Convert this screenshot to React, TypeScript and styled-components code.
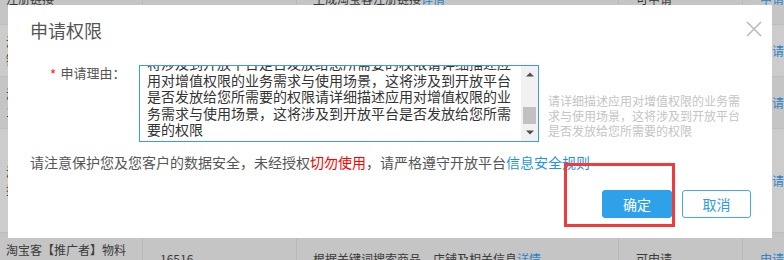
import React from "react";
import styled, { createGlobalStyle } from "styled-components";

const GlobalStyle = createGlobalStyle`
  html, body { margin: 0; padding: 0; }
  body {
    width: 784px;
    height: 260px;
    overflow: hidden;
    background: #c8c8c8;
    font-family: "Noto Sans CJK SC", "Noto Sans", sans-serif;
  }
`;

const Page = styled.div`
  position: relative;
  width: 784px;
  height: 260px;
  overflow: hidden;
`;

const Table = styled.div`
  margin-top: -27px;
  display: flex;
  flex-direction: column;
`;

const Row = styled.div<{ $h: number; $light: boolean }>`
  display: grid;
  grid-template-columns: 143px 154px 322px 124px 1fr;
  height: ${(p) => p.$h}px;
  box-sizing: border-box;
  border-bottom: 1px solid #bcbcbc;
  background: ${(p) => (p.$light ? "#cccccc" : "#c5c5c5")};
`;

const Cell = styled.div<{ $pad: number }>`
  display: flex;
  align-items: center;
  box-sizing: border-box;
  padding: 0 16px 0 ${(p) => p.$pad}px;
  border-right: 1px solid #b9b9b9;
  font-size: 12px;
  line-height: 18px;
  color: #3a3a3a;
  white-space: normal;
  overflow: hidden;
  &:last-child { border-right: none; white-space: nowrap; }
`;

const Link = styled.span`
  color: #2f82c6;
`;

const Modal = styled.div`
  position: absolute;
  left: 8px;
  top: 5px;
  width: 764px;
  height: 233px;
  background: #ffffff;
  display: flex;
  flex-direction: column;
`;

const Header = styled.div`
  height: 50px;
  display: flex;
  align-items: center;
  justify-content: space-between;
  padding: 0 10px 0 22px;
`;

const Title = styled.div`
  font-size: 18px;
  line-height: 24px;
  color: #555555;
`;

const Close = styled.div`
  width: 16px;
  height: 16px;
  display: flex;
  margin-top: -2px;
`;

const FormRow = styled.div`
  display: flex;
  align-items: flex-start;
  margin-top: 10px;
  padding-left: 42.5px;
`;

const Label = styled.div`
  width: 88.5px;
  font-size: 13px;
  line-height: 16px;
  color: #555555;
  white-space: nowrap;
`;

const Star = styled.span`
  display: inline-block;
  width: 10px;
  color: #ff0000;
  font-family: "Liberation Sans", sans-serif;
  font-size: 13px;
`;

const TextBox = styled.div`
  width: 400px;
  height: 77px;
  box-sizing: border-box;
  border: 1px solid #3a9ce4;
  display: flex;
  overflow: hidden;
`;

const TextContent = styled.div`
  flex: 1;
  overflow: hidden;
  padding-left: 7px;
  font-size: 14px;
  line-height: 16.4px;
  color: #333333;
`;

const TextInner = styled.div`
  margin-top: -10.6px;
`;

const Scrollbar = styled.div`
  width: 17px;
  background: #f1f1f1;
  display: flex;
  flex-direction: column;
  align-items: center;
`;

const ScrollArrow = styled.div`
  height: 17px;
  width: 17px;
  display: flex;
  align-items: center;
  justify-content: center;
`;

const Track = styled.div`
  flex: 1;
  display: flex;
  flex-direction: column;
  justify-content: flex-end;
  align-items: center;
`;

const Thumb = styled.div`
  width: 13px;
  height: 17px;
  background: #c1c1c1;
`;

const Hint = styled.div`
  align-self: flex-end;
  margin: 0 0 4.5px 9px;
  width: 192px;
  font-size: 12px;
  line-height: 15px;
  color: #c4c4c4;
`;

const Notice = styled.div`
  margin-top: 9.7px;
  padding-left: 22px;
  font-size: 14px;
  line-height: 20px;
  color: #555555;
  white-space: nowrap;
`;

const Danger = styled.span`
  color: #ff0000;
`;

const RuleLink = styled.span`
  color: #1f93e2;
`;

const Footer = styled.div`
  margin-top: 18.3px;
  display: flex;
  justify-content: flex-end;
  gap: 10px;
  padding-right: 21px;
`;

const Button = styled.button<{ $primary?: boolean }>`
  width: ${(p) => (p.$primary ? 70 : 69)}px;
  height: 28px;
  box-sizing: border-box;
  border-radius: 3px;
  border: 1px solid ${(p) => (p.$primary ? "#2ea1ea" : "#45a8ea")};
  background: ${(p) => (p.$primary ? "#2ea1ea" : "#ffffff")};
  color: ${(p) => (p.$primary ? "#ffffff" : "#2a9be6")};
  font-family: "Noto Sans CJK SC", sans-serif;
  font-size: 14px;
  padding: 0;
`;

const Annotation = styled.div`
  position: absolute;
  left: 556px;
  top: 158px;
  width: 111px;
  height: 64px;
  box-sizing: border-box;
  border: 3px solid #f23a3a;
  pointer-events: none;
`;

const reason =
  "将涉及到开放平台是否发放给您所需要的权限请详细描述应用对增值权限的业务需求与使用场景，这将涉及到开放平台是否发放给您所需要的权限请详细描述应用对增值权限的业务需求与使用场景，这将涉及到开放平台是否发放给您所需要的权限";

const rows = [
  { h: 52, light: false, c1: "注册链接", c2: "", c3: "生成淘宝客注册链接", c4: "可申请" },
  { h: 52, light: true, c1: "淘宝客【推广者】商品链接转换", c2: "", c3: "", c4: "" },
  { h: 52, light: false, c1: "淘宝客【推广者】1688物料", c2: "", c3: "", c4: "" },
  { h: 104, light: true, c1: "淘宝客【推广者】店铺搜索", c2: "", c3: "", c4: "" },
  { h: 52, light: false, c1: "淘宝客【推广者】物料搜索", c2: "16516", c3: "根据关键词搜索商品、店铺及相关信息", c4: "可申请" },
];

export default function App() {
  return (
    <Page>
      <GlobalStyle />
      <Table>
        {rows.map((r, i) => (
          <Row key={i} $h={r.h} $light={r.light}>
            <Cell $pad={6}>{r.c1}</Cell>
            <Cell $pad={17}>{r.c2}</Cell>
            <Cell $pad={16}>
              <span>
                {r.c3}
                {r.c3 && <Link>详情</Link>}
              </span>
            </Cell>
            <Cell $pad={17}>{r.c4}</Cell>
            <Cell $pad={17}>
              <Link>申请权限</Link>
            </Cell>
          </Row>
        ))}
      </Table>

      <Modal>
        <Header>
          <Title>申请权限</Title>
          <Close>
            <svg width="16" height="16" viewBox="0 0 16 16">
              <path d="M1 1 L15 15 M15 1 L1 15" stroke="#bbbbbb" strokeWidth="1.6" fill="none" />
            </svg>
          </Close>
        </Header>

        <FormRow>
          <Label>
            <Star>*</Star>申请理由：
          </Label>
          <TextBox>
            <TextContent>
              <TextInner>{reason}</TextInner>
            </TextContent>
            <Scrollbar>
              <ScrollArrow>
                <svg width="8" height="5" viewBox="0 0 8 5">
                  <path d="M0 4.5 L4 0.5 L8 4.5 Z" fill="#505050" />
                </svg>
              </ScrollArrow>
              <Track>
                <Thumb />
              </Track>
              <ScrollArrow>
                <svg width="8" height="5" viewBox="0 0 8 5">
                  <path d="M0 0.5 L8 0.5 L4 4.5 Z" fill="#505050" />
                </svg>
              </ScrollArrow>
            </Scrollbar>
          </TextBox>
          <Hint>
            请详细描述应用对增值权限的业务需求与使用场景，这将涉及到开放平台是否发放给您所需要的权限
          </Hint>
        </FormRow>

        <Notice>
          请注意保护您及您客户的数据安全，未经授权<Danger>切勿使用</Danger>，请严格遵守开放平台
          <RuleLink>信息安全规则</RuleLink>
        </Notice>

        <Footer>
          <Button $primary>确定</Button>
          <Button>取消</Button>
        </Footer>

        <Annotation />
      </Modal>
    </Page>
  );
}
